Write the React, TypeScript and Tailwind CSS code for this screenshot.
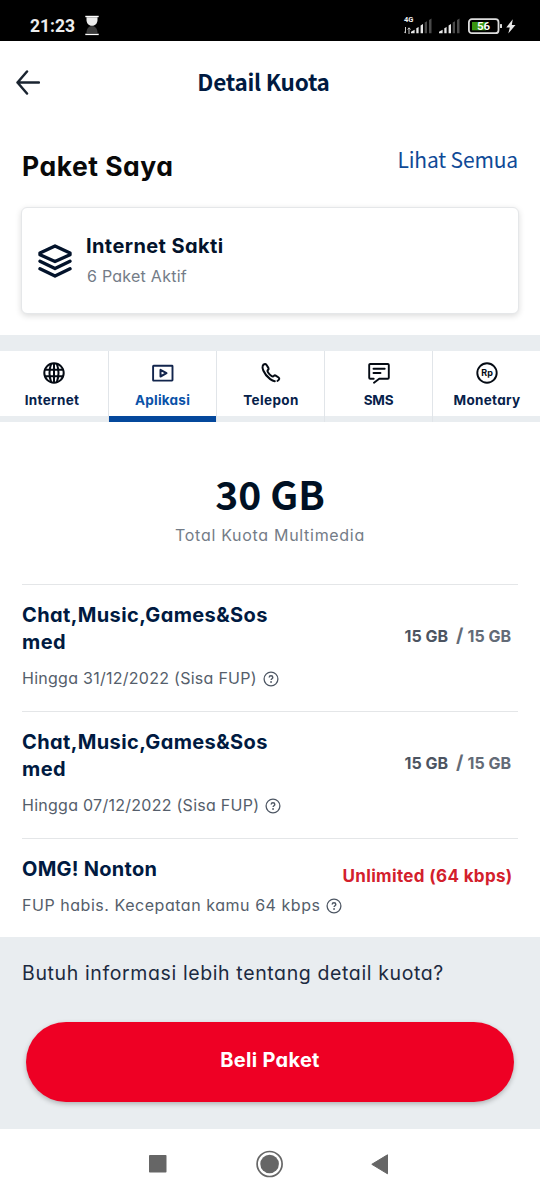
import React from "react";

type IconProps = { className?: string };

const SignalIcon = ({ className }: IconProps) => (
  <svg className={className} width="22" height="16" viewBox="0 0 22 16" fill="#e8e8e8">
    <path d="M0 15.3v-1.6l3.6-1.9v3.5z" />
    <path d="M5.3 10.2 7.6 9v6.3H5.3z" />
    <path d="M9.6 7.5 12 6v9.300H9.6z" />
    <path d="M13.7 4.600 16 3.200v12.1h-2.300zM18 2l2.500-1.500v14.800H18z" fill="#4a4a4a" />
  </svg>
);

const HourglassIcon = () => (
  <svg width="14" height="21" viewBox="0 0 14 21" fill="#fff">
    <rect x="0.300" y="0.800" width="13.400" height="1.400" />
    <path d="M1.500 2.200h11v2.600c0 3.400-2 6-5.500 6s-5.500-2.600-5.500-6z" fill="#ececec" />
    <path d="M7 11c3.500 0 5.500 3 5.500 7h-11c0-4 2-7 5.500-7z" fill="#3c3c3c" />
    <rect x="0.300" y="18.700" width="13.400" height="1.400" />
  </svg>
);

const LayersIcon = () => (
  <svg width="34" height="34" viewBox="0 0 34 34" fill="none" stroke="#03132b" strokeWidth="3.400" strokeLinejoin="round" strokeLinecap="round">
    <path d="M17 2 32 9v1.800L17 17.500 2 10.800V9z" />
    <path d="M2 17.200 17 24.500l15-7.300" />
    <path d="M2 24.800 17 32l15-7.200" />
  </svg>
);

const GlobeIcon = () => (
  <svg width="24" height="24" viewBox="0 0 24 24" fill="none" stroke="#050b14" strokeWidth="2">
    <circle cx="12" cy="12" r="9.700" />
    <path d="M12 2v20M2.500 8.800h19M2.500 15.200h19" />
    <path d="M9.300 2.500c-2.300 6-2.300 13 0 19M14.700 2.500c2.300 6 2.300 13 0 19" />
  </svg>
);

const VideoIcon = () => (
  <svg width="24" height="24" viewBox="0 0 24 24" fill="none" stroke="#12254d" strokeWidth="1.900" strokeLinejoin="round">
    <rect x="2.100" y="4.700" width="19.400" height="14.900" rx="0.500" />
    <path d="M9.500 8.900v6.600l6-3.300z" strokeWidth="2" />
  </svg>
);

const PhoneIcon = () => (
  <svg width="24" height="24" viewBox="0 0 24 24" fill="none" stroke="#050b14" strokeWidth="2" strokeLinejoin="round" strokeLinecap="round">
    <path d="M15.800 20.200c-1.400-.2-3-.9-4.600-2.100-3-2.200-5.500-5.200-6.900-8.600-.7-1.700-1-3.200-.7-4.300.3-1.300 1.300-2.100 2.400-2.200.6 0 1 .2 1.400.8l2 3.100c.4.700.3 1.300-.2 1.700-1 .8-.9 1.700-.1 2.900.9 1.300 1.900 2.400 3.100 3.300 1.100.8 2 .9 2.800 0 .5-.5 1.100-.6 1.700-.2l2.900 1.900c.6.400.8.9.6 1.500-.3.900-.9 1.600-1.700 1.900" />
  </svg>
);

const MessageIcon = () => (
  <svg width="24" height="24" viewBox="0 0 24 24" fill="none" stroke="#050b14" strokeWidth="1.900" strokeLinejoin="round" strokeLinecap="round">
    <path d="M6.700 17.800H3.200a1 1 0 0 1-1-1V4a1 1 0 0 1 1-1h17.600a1 1 0 0 1 1 1v12.800a1 1 0 0 1-1 1h-8.600L7 21.700" />
    <path d="M6.500 7.800h11.200M6.500 12h7" />
  </svg>
);

const RupiahIcon = () => (
  <svg width="24" height="24" viewBox="0 0 24 24">
    <circle cx="12" cy="12" r="9.700" fill="none" stroke="#050b14" strokeWidth="1.900" />
    <text x="12.100" y="14.600" textAnchor="middle" fontFamily="Inter, sans-serif" fontSize="9" fontWeight="700" fill="#050b14">Rp</text>
  </svg>
);

const HelpIcon = () => (
  <svg width="16" height="16" viewBox="0 0 16 16" className="shrink-0">
    <circle cx="8" cy="8" r="6.900" fill="none" stroke="#4e5764" strokeWidth="1.300" />
    <path d="M6.200 6.500c0-1.100.8-1.700 1.800-1.700s1.800.6 1.800 1.600c0 1.300-1.700 1.300-1.700 2.600" fill="none" stroke="#4e5764" strokeWidth="1.400" />
    <circle cx="8.050" cy="11" r="0.900" fill="#4e5764" />
  </svg>
);

const tabs = [
  { label: "Internet", icon: <GlobeIcon />, style: "tracking-[0.300px] pr-[4px]" },
  { label: "Aplikasi", icon: <VideoIcon />, style: "tracking-[0.250px]", active: true },
  { label: "Telepon", icon: <PhoneIcon />, style: "tracking-[0.400px] pl-px" },
  { label: "SMS", icon: <MessageIcon />, style: "tracking-[-0.300px]" },
  { label: "Monetary", icon: <RupiahIcon />, style: "tracking-[0.300px] pl-px" },
];

const quotas = [
  { lines: ["Chat,Music,Games&Sos", "med"], note: "Hingga 31/12/2022 (Sisa FUP)" },
  { lines: ["Chat,Music,Games&Sos", "med"], note: "Hingga 07/12/2022 (Sisa FUP)" },
];

const Note = ({ text, track }: { text: string; track: string }) => (
  <div className="flex h-6 items-center gap-[6px] whitespace-nowrap text-[16px] text-[#555e6b]">
    <span className={track}>{text}</span>
    <span className="pt-[2px]"><HelpIcon /></span>
  </div>
);

export default function App() {
  return (
    <div className="flex h-[1200px] w-[540px] flex-col overflow-hidden bg-white font-['Inter',sans-serif] text-[#03132b] [font-feature-settings:'cv11']">
      <div className="flex h-[41px] shrink-0 items-start justify-between bg-black pl-[30px] pr-[24px] text-[#eee]">
        <div className="flex items-start gap-[10px] pt-[15px]">
          <span className="font-['Roboto',sans-serif] text-[17.500px] font-bold leading-[22px]">21:23</span>
          <HourglassIcon />
        </div>
        <div className="flex items-start pt-[16px]">
          <div className="flex w-[11px] flex-col font-['Roboto',sans-serif] text-[7.500px] font-bold leading-[8px]">
            <span>4G</span>
            <svg width="7" height="7" viewBox="0 0 7 7" className="mt-[3px]" fill="none" stroke="#ccc" strokeWidth="1">
              <path d="M1.500 0v6M0 4.500l1.500 1.700M5 7V1M3.700 2.500 5 .8l1.500 1.700" />
            </svg>
          </div>
          <SignalIcon className="-ml-[4px] mt-[2px]" />
          <SignalIcon className="ml-[6px] mt-[2px]" />
          <svg width="36" height="18" viewBox="0 0 36 18" className="ml-[7px] mt-[1px]">
            <rect x="0.900" y="2.200" width="29.600" height="14" rx="3" fill="none" stroke="#ddd" strokeWidth="1.800" />
            <rect x="4" y="5" width="14" height="8.300" fill="#389611" />
            <rect x="32" y="7" width="2" height="4" rx="0.500" fill="#ddd" />
            <text x="15.500" y="13.200" textAnchor="middle" fontFamily="Roboto, sans-serif" fontSize="11.500" fontWeight="600" fill="#fff">56</text>
          </svg>
          <svg width="10" height="15" viewBox="0 0 10 15" className="ml-[2px] mt-[3px]">
            <path d="M6.800.2.300 8.400h3.500L2.300 14.600l7.200-8.700H5.800z" fill="#e8e8e8" />
          </svg>
        </div>
      </div>

      <header className="flex h-[83px] shrink-0 items-center px-4">
        <svg width="24" height="25" viewBox="0 0 24 25" fill="none" stroke="#1a2430" strokeWidth="2.500" strokeLinecap="round" strokeLinejoin="round">
          <path d="M11 1.500 1.500 12.500 11 23.500M1.500 12.500h21.500" />
        </svg>
        <h1 className="flex-1 whitespace-nowrap pb-[3px] pr-[37px] text-center font-['Noto_Sans_CJK_JP',sans-serif] text-[22.500px] font-bold leading-none tracking-[-0.250px] text-[#001a41]">Detail Kuota</h1>
      </header>

      <div className="flex h-[83px] shrink-0 items-start justify-between px-[22px]">
        <h2 className="whitespace-nowrap pt-[26px] text-[26.500px] font-bold leading-[32px] tracking-[0.500px] text-[#090909]">Paket Saya</h2>
        <span className="whitespace-nowrap pt-[20px] font-['Noto_Sans_CJK_JP',sans-serif] text-[21px] leading-[30px] tracking-[-0.150px] text-[#0f4a97]">Lihat Semua</span>
      </div>

      <div className="mx-[21px] flex h-[107px] shrink-0 items-center gap-[14px] rounded-[6px] border border-[#e5e7e9] bg-white pl-[16px] shadow-[0_2px_6px_rgba(0,0,0,0.140)]">
        <LayersIcon />
        <div className="flex flex-col gap-[6px] whitespace-nowrap pb-px">
          <span className="text-[20px] font-bold leading-[26px] tracking-[0.400px]">Internet Sakti</span>
          <span className="pl-px text-[16px] leading-[22px] tracking-[0.250px] text-[#747c87]">6 Paket Aktif</span>
        </div>
      </div>

      <div className="mt-[21px] h-[16px] shrink-0 bg-[#e9edf0]" />
      <nav className="grid h-[71px] shrink-0 grid-cols-5 bg-[#e9edf0]">
        {tabs.map((tab, i) => (
          <div key={tab.label} className={"flex flex-col " + (i > 0 ? "border-l border-[#e1e5e9]" : "")}>
            <div className="flex h-[65px] flex-col items-center bg-white pt-[10px]">
              {tab.icon}
              <span className={"mt-[6px] whitespace-nowrap text-[13.500px] font-bold leading-[18px] " + tab.style + (tab.active ? " text-[#0a52a8]" : " text-[#06214a]")}>{tab.label}</span>
            </div>
            <div className={"h-[6px] " + (tab.active ? "bg-[#04489c]" : "bg-[#e9edf0]")} />
          </div>
        ))}
      </nav>

      <section className="flex h-[162px] shrink-0 flex-col items-center pt-[45px]">
        <strong className="whitespace-nowrap font-['Noto_Sans_CJK_JP',sans-serif] text-[39px] font-bold leading-[52px] tracking-[0px] text-[#001124]">30 GB</strong>
        <span className="mt-[4px] whitespace-nowrap text-[16px] leading-[24px] tracking-[0.700px] text-[#747c87]">Total Kuota Multimedia</span>
      </section>

      <main className="flex h-[353px] shrink-0 flex-col px-[22px]">
        {quotas.map((q) => (
          <article key={q.note} className="flex h-[127px] shrink-0 items-start justify-between border-t border-[#e4e6e8] pt-[17px]">
            <div>
              <div className="whitespace-nowrap text-[20px] font-bold leading-[27px] tracking-[0.380px] text-[#001a41]">
                {q.lines.map((l) => <div key={l}>{l}</div>)}
              </div>
              <div className="mt-[10px]"><Note text={q.note} track="tracking-[0.270px]" /></div>
            </div>
            <div className="mr-[7px] mt-[22px] flex whitespace-nowrap text-[16px] font-bold leading-[24px] text-[#4c5461]">
              <span>15 GB</span>
              <span className="ml-[8px] text-[#636b77]"><span className="text-[19px]">/</span><span className="pl-[4px]">15 GB</span></span>
            </div>
          </article>
        ))}
        <article className="flex flex-1 items-start justify-between border-t border-[#e4e6e8] pt-[17px]">
          <div>
            <div className="whitespace-nowrap text-[20px] font-bold leading-[27px] tracking-[0.250px] text-[#001a41]">OMG! Nonton</div>
            <div className="mt-[10px]"><Note text="FUP habis. Kecepatan kamu 64 kbps" track="tracking-[0.540px]" /></div>
          </div>
          <div className="mr-[8px] mt-[8px] whitespace-nowrap text-[17px] font-bold leading-[24px] tracking-[0.350px] text-[#d3202c]">Unlimited (64 kbps)</div>
        </article>
      </main>

      <section className="flex h-[192px] shrink-0 flex-col bg-[#e9edf0]">
        <p className="ml-[22px] mt-[22px] whitespace-nowrap text-[19.500px] leading-[28px] tracking-[0.620px] text-[#1c2a40]">Butuh informasi lebih tentang detail kuota?</p>
        <button className="mx-[26px] mt-[35px] h-[80px] rounded-full bg-[#ee0024] pb-[4px] text-[20px] font-bold tracking-[0.300px] text-white shadow-[0_2px_5px_rgba(0,0,0,0.250)]">Beli Paket</button>
      </section>

      <footer className="flex h-[71px] shrink-0 items-center pb-px pl-[149px]">
        <svg width="18" height="18" viewBox="0 0 18 18"><rect width="17.500" height="17.500" rx="0.800" fill="#666" /></svg>
        <svg width="28" height="28" viewBox="0 0 28 28" className="ml-[89px]">
          <circle cx="13.600" cy="14" r="12.500" fill="none" stroke="#666" strokeWidth="1.700" />
          <circle cx="13.600" cy="14" r="9.300" fill="#666" />
        </svg>
        <svg width="18" height="21" viewBox="0 0 18 21" className="ml-[87px]"><path d="M16.500.8v19L.8 10.300z" fill="#666" stroke="#666" strokeLinejoin="round" /></svg>
      </footer>
    </div>
  );
}
